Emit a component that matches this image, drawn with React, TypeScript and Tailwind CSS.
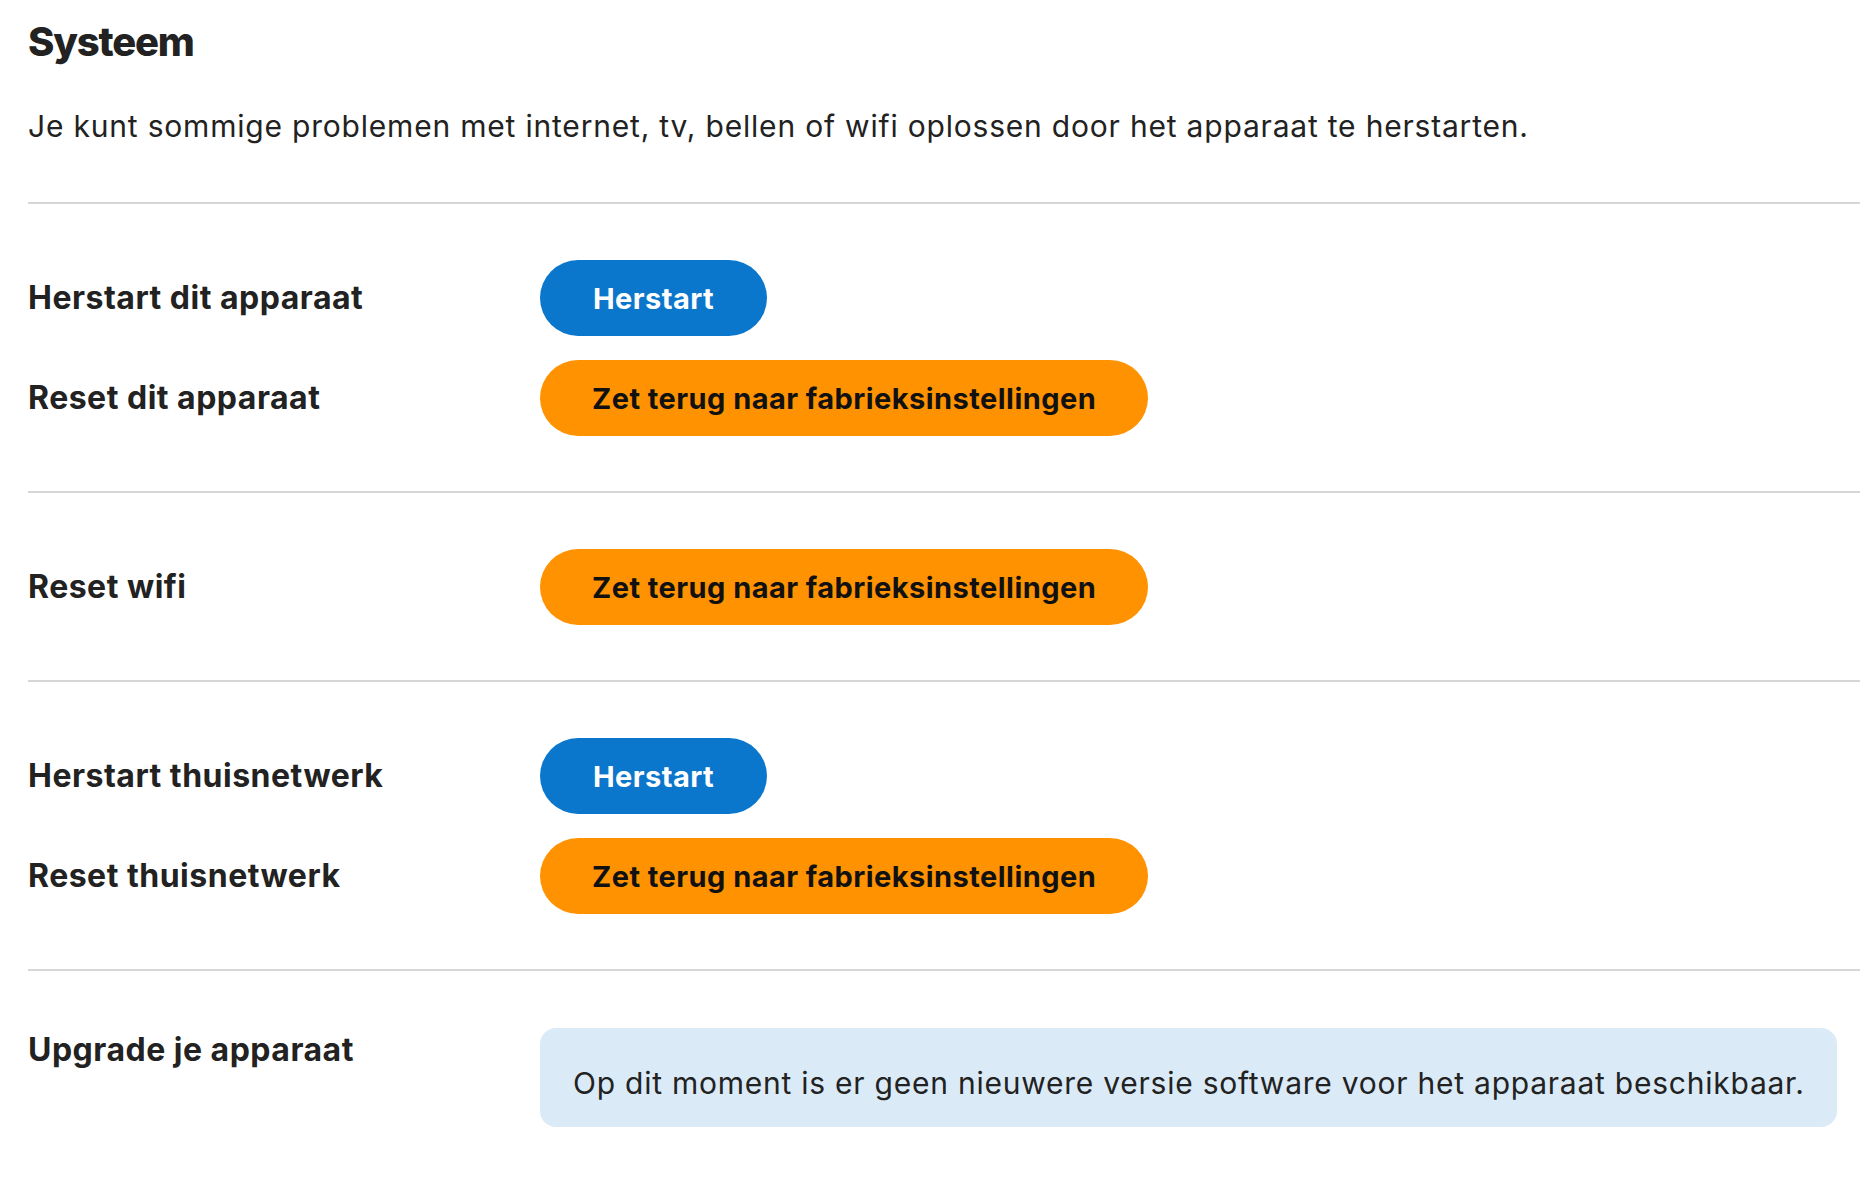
import React from 'react';

type Action = {
  label: string;
  text: string;
  kind: 'blue' | 'orange';
};

const sections: Action[][] = [
  [
    { label: 'Herstart dit apparaat', text: 'Herstart', kind: 'blue' },
    { label: 'Reset dit apparaat', text: 'Zet terug naar fabrieksinstellingen', kind: 'orange' },
  ],
  [{ label: 'Reset wifi', text: 'Zet terug naar fabrieksinstellingen', kind: 'orange' }],
  [
    { label: 'Herstart thuisnetwerk', text: 'Herstart', kind: 'blue' },
    { label: 'Reset thuisnetwerk', text: 'Zet terug naar fabrieksinstellingen', kind: 'orange' },
  ],
];

function ActionRow({ label, text, kind }: Action) {
  const btn =
    kind === 'blue'
      ? 'bg-[#0b77cc] text-white px-[53px]'
      : 'bg-[#ff9200] text-[#111] px-[52px]';
  return (
    <div className="flex items-center">
      <div className="w-[512px] shrink-0 text-[32px] leading-[40px] font-bold tracking-[0.5px] text-[#222]">{label}</div>
      <button
        type="button"
        className={`${btn} h-[76px] rounded-full text-[29px] font-bold tracking-[0.45px] leading-none`}
      >
        {text}
      </button>
    </div>
  );
}

export default function App() {
  return (
    <div className="min-h-screen bg-white pl-[28px] font-['Inter','Liberation_Sans',sans-serif] text-[#222]">
      <h1 className="pt-[18px] text-[40px] leading-[48px] font-extrabold tracking-[-1.2px]">Systeem</h1>
      <p className="mt-[40px] text-[30px] leading-[40px] tracking-[0.8px]">
        Je kunt sommige problemen met internet, tv, bellen of wifi oplossen door het apparaat te herstarten.
      </p>

      <div className="mt-[56px]">
        {sections.map((rows, i) => (
          <section key={i} className="border-t-2 border-[#d6d6d6] pt-[56px] pb-[55px] flex flex-col gap-[24px]">
            {rows.map((r) => (
              <ActionRow key={r.label} {...r} />
            ))}
          </section>
        ))}

        <section className="border-t-2 border-[#d6d6d6] pt-[57px] pb-[60px] flex items-start">
          <div className="w-[512px] shrink-0 pt-[2px] text-[32px] leading-[40px] font-bold tracking-[0.5px]">Upgrade je apparaat</div>
          <div className="flex-1 mr-[23px] rounded-[16px] bg-[#dbeaf7] pl-[33px] pr-[24px] pt-[35px] pb-[24px] text-[30px] leading-[40px] tracking-[0.76px]">
            Op dit moment is er geen nieuwere versie software voor het apparaat beschikbaar.
          </div>
        </section>
      </div>
    </div>
  );
}
